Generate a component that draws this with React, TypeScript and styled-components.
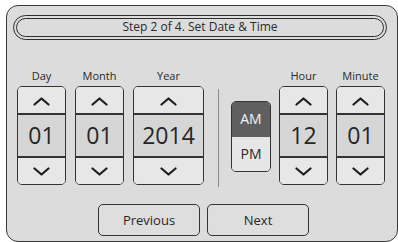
import React from "react";
import styled, { createGlobalStyle } from "styled-components";

const Global = createGlobalStyle`
  html, body { margin: 0; padding: 0; background: #ffffff; }
  body { font-family: "Open Sans", "Noto Sans", sans-serif; color: #262626; }
  * { box-sizing: border-box; }
`;

const Panel = styled.div`
  margin: 5px 0 0 6px;
  width: 392px;
  height: 237px;
  border: 1px solid #3a3a3a;
  border-radius: 12px;
  background: #dcdcdc;
  padding-top: 9px;
  display: flex;
  flex-direction: column;
`;

const HeaderOuter = styled.div`
  margin-left: 6px;
  width: 374px;
  height: 25px;
  border: 1px solid #2e2e2e;
  border-radius: 13px;
  padding: 2px;
`;

const HeaderInner = styled.div`
  height: 100%;
  border: 1px solid #2e2e2e;
  border-radius: 10px;
  display: flex;
  align-items: center;
  justify-content: center;
  font-size: 12px;
  line-height: 1;
  color: #2a2a2a;
  padding-bottom: 1px;
`;

const PickerRow = styled.div`
  margin-top: 29px;
  padding-left: 10px;
  display: flex;
  align-items: flex-end;
`;

const Column = styled.div<{ $gap?: number }>`
  display: flex;
  flex-direction: column;
  align-items: center;
  margin-right: ${(p) => p.$gap ?? 0}px;
`;

const Label = styled.div`
  font-size: 11px;
  line-height: 14px;
  height: 14px;
  margin-bottom: 3px;
  color: #2a2a2a;
`;

const Spinner = styled.div<{ $w: number }>`
  width: ${(p) => p.$w}px;
  height: 99px;
  border: 1px solid #333;
  border-radius: 5px;
  overflow: hidden;
  display: flex;
  flex-direction: column;
  background: #e7e7e7;
`;

const Arrow = styled.div<{ $pad?: number }>`
  height: 26px;
  display: flex;
  align-items: center;
  justify-content: center;
  background: #e7e7e7;
  padding-top: ${(p) => p.$pad ?? 0}px;
`;

const Value = styled.div`
  height: 45px;
  border-top: 2px solid #333;
  border-bottom: 2px solid #333;
  background: #d6d6d6;
  display: flex;
  align-items: center;
  justify-content: center;
  font-size: 23px;
  line-height: 1;
  color: #262626;
  padding-bottom: 1px;
`;

const Separator = styled.div`
  width: 1px;
  height: 98px;
  background: #8a8a8a;
  margin: 0 12px -2px 14px;
`;

const MeridiemBox = styled.div`
  width: 40px;
  height: 71px;
  border: 1px solid #333;
  border-radius: 5px;
  overflow: hidden;
  display: flex;
  flex-direction: column;
  margin-bottom: 13px;
  margin-right: 8px;
`;

const Meridiem = styled.div<{ $active?: boolean }>`
  flex: 1;
  display: flex;
  align-items: center;
  justify-content: center;
  font-size: 14px;
  line-height: 1;
  background: ${(p) => (p.$active ? "#5f5f5f" : "#e6e6e6")};
  color: ${(p) => (p.$active ? "#f4f4f4" : "#262626")};
`;

const ButtonRow = styled.div`
  margin-top: 19px;
  padding-left: 91px;
  display: flex;
  gap: 7px;
`;

const NavButton = styled.button`
  width: 102px;
  height: 32px;
  border: 1px solid #333;
  border-radius: 5px;
  background: #dedede;
  font-family: "Open Sans", "Noto Sans", sans-serif;
  font-size: 13px;
  color: #262626;
  padding: 0 0 1px 0;
`;

const Chevron = ({ down }: { down?: boolean }) => (
  <svg width="17" height="9" viewBox="0 0 17 9">
    <polyline
      points={down ? "1.5,1.5 8.5,7.5 15.5,1.5" : "1.5,7.5 8.5,1.5 15.5,7.5"}
      fill="none"
      stroke="#1e1e1e"
      strokeWidth="2.2"
      strokeLinecap="round"
      strokeLinejoin="round"
    />
  </svg>
);

const Picker = ({ label, value, w, gap }: { label: string; value: string; w: number; gap?: number }) => (
  <Column $gap={gap}>
    <Label>{label}</Label>
    <Spinner $w={w}>
      <Arrow $pad={2}>
        <Chevron />
      </Arrow>
      <Value>{value}</Value>
      <Arrow>
        <Chevron down />
      </Arrow>
    </Spinner>
  </Column>
);

export default function App() {
  return (
    <>
      <Global />
      <Panel>
        <HeaderOuter>
          <HeaderInner>Step 2 of 4. Set Date &amp; Time</HeaderInner>
        </HeaderOuter>
        <PickerRow>
          <Picker label="Day" value="01" w={49} gap={9} />
          <Picker label="Month" value="01" w={49} gap={9} />
          <Picker label="Year" value="2014" w={71} />
          <Separator />
          <MeridiemBox>
            <Meridiem $active>AM</Meridiem>
            <Meridiem>PM</Meridiem>
          </MeridiemBox>
          <Picker label="Hour" value="12" w={49} gap={8} />
          <Picker label="Minute" value="01" w={49} />
        </PickerRow>
        <ButtonRow>
          <NavButton>Previous</NavButton>
          <NavButton>Next</NavButton>
        </ButtonRow>
      </Panel>
    </>
  );
}
